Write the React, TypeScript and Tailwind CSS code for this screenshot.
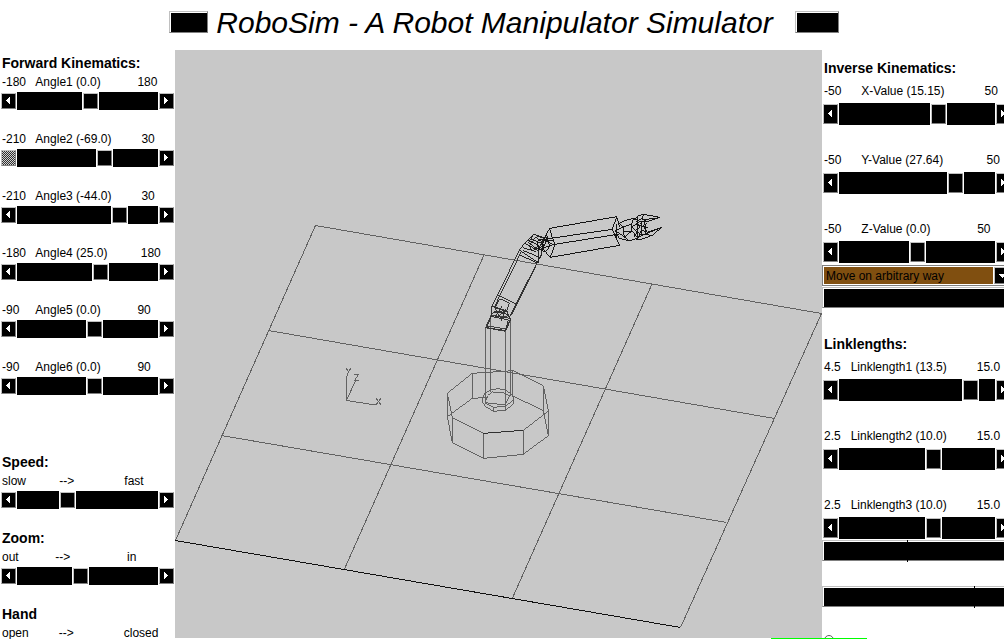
import { useState } from "react";

type Size = "short" | "tall";

interface AxisProps {
  id: string;
  text: string;
  position: number;
  size: Size;
  pressed?: boolean;
}

const bevel = "border border-t-[#c0c0c0] border-l-[#c0c0c0] border-r-[#808080] border-b-[#808080]";

const trackBase =
  "m-0 block cursor-default appearance-none rounded-none bg-black outline-none [&::-webkit-slider-thumb]:w-[17px] [&::-webkit-slider-thumb]:appearance-none [&::-webkit-slider-thumb]:rounded-none [&::-webkit-slider-thumb]:border [&::-webkit-slider-thumb]:border-white [&::-webkit-slider-thumb]:bg-black [&::-webkit-slider-thumb]:shadow-[inset_1px_1px_0_#c0c0c0,inset_-1px_-1px_0_#808080]";

function Arrow({ side }: { side: "left" | "right" }) {
  return (
    <svg viewBox="0 0 5 8" width="5" height="8" fill="white" shapeRendering="crispEdges" aria-hidden="true">
      <path d={side === "left" ? "M3 0H4V7H3V6H2V5H1V4H0V3H1V2H2V1H3Z" : "M0 0H1V1H2V2H3V3H4V4H3V5H2V6H1V7H0Z"} />
    </svg>
  );
}

function Axis({ id, text, position, size, pressed }: AxisProps) {
  const [value, setValue] = useState(position);
  const short = size === "short";
  const max = short ? 124 : 139;
  const step = (by: number) => setValue((v) => Math.min(max, Math.max(0, v + by)));
  const arrow = `flex w-[15px] shrink-0 items-center justify-center bg-black ${bevel} ${short ? "h-4" : "h-5"}`;
  return (
    <div>
      <label htmlFor={id} className={short ? "block h-5 pl-0.5 leading-5 whitespace-pre" : "block h-6 pl-0.5 leading-6 whitespace-pre"}>
        {text}
      </label>
      <div className="flex items-center gap-px pl-px">
        <button type="button" aria-label="Decrease" onClick={() => step(-1)} className={arrow}>
          {pressed ? (
            <span className="h-full w-full bg-[repeating-conic-gradient(#d0d0d0_0_25%,#303030_0_50%)] bg-[length:2px_2px]" />
          ) : (
            <Arrow side="left" />
          )}
        </button>
        <input
          id={id}
          type="range"
          min={0}
          max={max}
          value={value}
          onChange={(e) => setValue(Number(e.target.value))}
          className={`${trackBase} ${
            short
              ? "h-[18px] w-[141px] [&::-webkit-slider-thumb]:h-[18px]"
              : "h-[22px] w-[156px] [&::-webkit-slider-thumb]:h-[22px]"
          }`}
        />
        <button type="button" aria-label="Increase" onClick={() => step(1)} className={arrow}>
          <Arrow side="right" />
        </button>
      </div>
    </div>
  );
}

const joints = [
  { id: "a1", text: "-180   Angle1 (0.0)           180", position: 65 },
  { id: "a2", text: "-210   Angle2 (-69.0)         30", position: 79, pressed: true },
  { id: "a3", text: "-210   Angle3 (-44.0)         30", position: 94 },
  { id: "a4", text: "-180   Angle4 (25.0)          180", position: 75 },
  { id: "a5", text: "-90     Angle5 (0.0)           90", position: 69 },
  { id: "a6", text: "-90     Angle6 (0.0)           90", position: 69 },
];

const settings = [
  { id: "speed", title: "Speed:", text: "slow          -->               fast", position: 42 },
  { id: "zoom", title: "Zoom:", text: "out           -->                 in", position: 55 },
  { id: "hand", title: "Hand", text: "open         -->               closed", position: 42 },
];

const targets = [
  { id: "x", text: "-50      X-Value (15.15)            50", position: 91 },
  { id: "y", text: "-50      Y-Value (27.64)             50", position: 108 },
  { id: "z", text: "-50      Z-Value (0.0)              50", position: 70 },
];

const links = [
  { id: "l1", text: "4.5   Linklength1 (13.5)         15.0", position: 123 },
  { id: "l2", text: "2.5   Linklength2 (10.0)         15.0", position: 86 },
  { id: "l3", text: "2.5   Linklength3 (10.0)         15.0", position: 86 },
];

function Scene() {
  return (
    <svg
      viewBox="175 50 647 588"
      preserveAspectRatio="xMinYMin meet"
      className="block w-full"
      fill="none"
      stroke="#626262"
      strokeWidth="1"
      shapeRendering="crispEdges"
      role="img"
      aria-label="Wireframe robot arm"
    >
      <path d="M175.500 540.500L315.500 225.500L821.500 313.500L680.500 627.500M268.500 330.500L774.500 418.500M221.500 435.500L726.500 522.500M484 255L344 570M652 284L512 599" />
      <path d="M175.500 540.500L680.500 627.500" stroke="#101010" />
      <path d="M346.500 376V400.500L376 405M346.500 400L356 380M346 368L348.500 372L351 368M348.500 372L347 376M354 374.500H358.500L354.500 380.500H358.500M376 398L381 405M381 398L376 405" />
      <g transform="translate(435 310) scale(.333333)" strokeWidth="3">
        <path d="M37 250L112 190L235 182L325 227L340 303L265 361L145 370L52 323ZM37 320L112 265L160 262M232 257L325 302M37 250V320L52 398L145 445L265 433L340 377L325 302M52 323V398M112 190V265M325 227V302M340 303V377M265 361V433M145 370V445" />
        <path d="M145 370L265 361" stroke="#303030" />
        <path d="M152 53V280M166 15V247M211 60V300M227 25V258M232 182V262" />
        <path d="M143 262L150 249L166 240L190 236L214 241L229 253L235 263V282L211 301L176 304L150 289L143 276ZM150 279L176 292L211 289L235 270M150 278L158 257L172 246L202 247L224 258L215 275L211 285L150 278M176 292V304" />
        <path d="M152 53L160 33L170 15L190 19L213 20L227 28L211 64L152 53M158 48L211 57L225 30" stroke="#404040" />
      </g>
      <g transform="translate(470 205) scale(.333333)" strokeWidth="3">
        <g stroke="#333333">
          <path d="M66 304L150 132M73 306L154 140M120 332L206 164M125 330L213 151M82 269L138 297M89 281L117 294" />
          <path d="M89 281L75 308L109 320L119 293M66 304L63 334L50 368L107 377L122 344L110 317L66 304M72 320L109 326L122 344M63 334L115 345L107 377M75 308L87 335L107 312L94 349M96 303L76 334L110 339M66 325L90 318L113 330" />
          <path d="M150 137L203 172M158 136L209 157M150 150L201 174L213 153M150 132L164 115L190 88L220 97L213 154M164 115L205 137L220 98M190 88L176 114L202 132L219 112L197 96L178 122L188 139L207 121L173 104M158 128L197 139M201 95L245 101M184 102L224 119M206 174V130" stroke="#222222" />
        </g>
        <g stroke="#151515">
          <path d="M239 70L440 35M221 103L427 73M249 119L448 87M241 157L449 121" />
          <path d="M239 70L221 103L216 129L241 157L255 119L247 98L239 70M216 102L249 119L219 129M230 88L239 125L226 141L205 132M216 102L201 109L206 131L222 120M233 97L218 134M225 106L250 105" />
          <path d="M440 35L427 73L449 121M440 35L449 66M427 73L438 99L441 58M447 55L470 45L492 40L484 57L459 66L436 77L463 96L478 108L447 99L436 77M459 66L463 96L486 78L484 57M459 81L486 78L503 99L478 108M492 40L509 49L486 66L502 81L491 96M447 55L459 66" />
          <path d="M488 47L504 33L521 28L569 37L532 50L517 40L500 48L509 68L495 77L512 88L497 102L511 104L547 91L575 67L532 82L515 75L506 94M521 28L516 43L532 50L509 49M569 38L529 43L509 57M575 67L517 91L500 99M532 54L519 63L532 82M503 36L503 104M515 48V94M524 52L528 88M496 59L534 68M547 91L516 88" />
        </g>
      </g>
    </svg>
  );
}

const heading = "pl-0.5 text-[14px] leading-[18px] font-bold whitespace-nowrap";

export default function App() {
  return (
    <div className="flex h-screen flex-col overflow-hidden bg-white font-['Liberation_Sans',Arial,sans-serif] text-[12px] text-black">
      <header className="flex h-[50px] shrink-0 items-center justify-center gap-2 pb-1.5 pl-1">
        <button type="button" aria-label="Previous" className={`h-[22px] w-[39px] bg-black shadow-[inset_1px_1px_0_white] ${bevel}`} />
        <h1 className="pt-0.5 text-[30px] leading-9 whitespace-nowrap italic">RoboSim - A Robot Manipulator Simulator</h1>
        <button type="button" aria-label="Next" className={`ml-3.5 h-[22px] w-11 bg-black shadow-[inset_1px_1px_0_white] ${bevel}`} />
      </header>

      <div className="flex min-h-0 flex-1">
        <aside className="w-[175px] shrink-0 pt-1">
          <h2 className={heading}>Forward Kinematics:</h2>
          <div className="flex flex-col gap-[19px]">
            {joints.map((j) => (
              <Axis key={j.id} size="short" {...j} />
            ))}
          </div>
          <div className="mt-[58px] flex flex-col gap-5">
            {settings.map(({ title, ...s }) => (
              <section key={s.id}>
                <h2 className={heading}>{title}</h2>
                <Axis size="short" {...s} />
              </section>
            ))}
          </div>
        </aside>

        <main className="relative mb-px min-w-0 flex-1 bg-[#c8c8c8]">
          <Scene />
          <div className="absolute -right-[45px] -bottom-px z-10 h-px w-24 bg-[#00ff00]" />
        </main>

        <aside className="w-[182px] shrink-0 overflow-hidden pt-[9px]">
          <div className="w-[190px]">
            <h2 className={heading}>Inverse Kinematics:</h2>
            <div className="mt-0.5 flex flex-col gap-[23px]">
              {targets.map((t) => (
                <Axis key={t.id} size="tall" {...t} />
              ))}
            </div>
            <div className="relative mt-0.5 h-[21px] border border-[#808080] bg-white p-px">
              <select aria-label="Movement" className="block h-[17px] w-[169px] appearance-none bg-[#804f10] px-0.5 pt-px leading-4 outline-none">
                <option>Move on arbitrary way</option>
              </select>
              <span className={`pointer-events-none absolute top-px left-[171px] flex h-[17px] w-4 items-center justify-center bg-black ${bevel}`}>
                <svg viewBox="0 0 7 4" width="7" height="4" fill="white" shapeRendering="crispEdges" aria-hidden="true">
                  <path d="M0 0H7V1H6V2H5V3H4V4H3V3H2V2H1V1H0Z" />
                </svg>
              </span>
            </div>
            <button type="button" aria-label="Move" className={`mt-px block h-[21px] w-full bg-black shadow-[inset_1px_1px_0_white] ${bevel}`} />

            <h2 className={`${heading} mt-[27px]`}>Linklengths:</h2>
            <div className="mt-0.5 flex flex-col gap-[23px]">
              {links.map((l) => (
                <Axis key={l.id} size="tall" {...l} />
              ))}
            </div>
            <div className="mt-px flex flex-col gap-[25px]">
              <button type="button" aria-label="Apply" className={`relative block h-[21px] w-full bg-black shadow-[inset_1px_1px_0_white] ${bevel}`}>
                <span className="absolute -top-px -bottom-0.5 left-[84px] w-px bg-black" />
              </button>
              <button type="button" aria-label="Reset" className={`relative block h-[21px] w-full bg-black shadow-[inset_1px_1px_0_white] ${bevel}`}>
                <span className="absolute -top-px -bottom-0.5 left-[151px] w-px bg-black" />
              </button>
            </div>
            <label className="mt-7 ml-0.5 block">
              <input type="radio" aria-label="Trace" className="block size-[10px] appearance-none rounded-full border border-[#606060]" />
            </label>
          </div>
        </aside>
      </div>
    </div>
  );
}
